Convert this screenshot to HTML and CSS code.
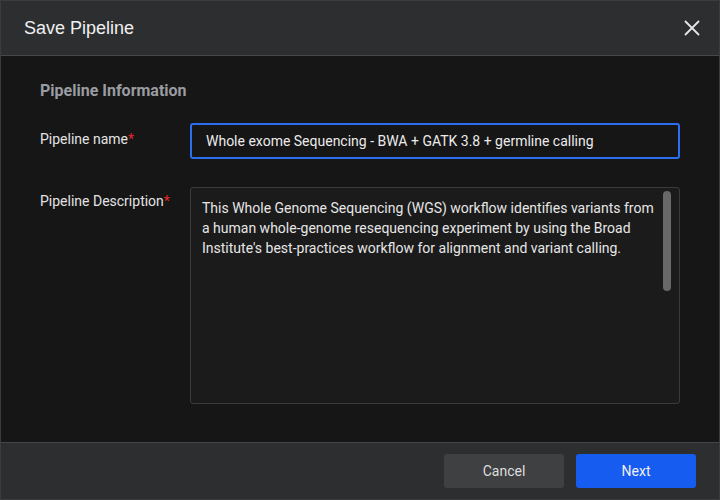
FILE: index.html
```html
<!DOCTYPE html>
<html>
<head>
<meta charset="utf-8">
<link rel="stylesheet" href="styles.css">
</head>
<body>
<div class="dialog">
  <header class="dlg-header">
    <h1 class="dlg-title">Save Pipeline</h1>
    <button class="close-btn" aria-label="Close">
      <svg width="16" height="16" viewBox="0 0 16 16"><path d="M1 1L15 15M15 1L1 15" stroke="#e6e6e6" stroke-width="1.8" fill="none"/></svg>
    </button>
  </header>
  <main class="dlg-body">
    <h2 class="section-title">Pipeline Information</h2>
    <div class="form-row row-name">
      <label class="field-label label-name">Pipeline name<span class="req">*</span></label>
      <div class="text-input">Whole exome Sequencing - BWA + GATK 3.8 + germline calling</div>
    </div>
    <div class="form-row row-desc">
      <label class="field-label label-desc">Pipeline Description<span class="req">*</span></label>
      <div class="textarea">
        <p class="textarea-text">This Whole Genome Sequencing (WGS) workflow identifies variants from a human whole-genome resequencing experiment by using the Broad Institute's best-practices workflow for alignment and variant calling.</p>
        <div class="scroll-thumb"></div>
      </div>
    </div>
  </main>
  <footer class="dlg-footer">
    <button class="btn btn-cancel">Cancel</button>
    <button class="btn btn-next">Next</button>
  </footer>
</div>
</body>
</html>
```

FILE: styles.css
```css
* { box-sizing: border-box; }
html, body { margin: 0; padding: 0; background: #161616; }
body { font-family: Roboto, "Liberation Sans", sans-serif; }

.dialog {
  width: 720px;
  height: 500px;
  display: flex;
  flex-direction: column;
  border: 1px solid #3b3c3e;
  background: #161616;
}

.dlg-header {
  height: 55px;
  flex: none;
  background: #2d2e30;
  border-bottom: 1px solid #47484a;
  display: flex;
  align-items: center;
  justify-content: space-between;
  padding: 0 19px 0 23px;
}
.dlg-title {
  margin: 0;
  font-family: "Liberation Sans", Arial, sans-serif;
  font-size: 18px;
  font-weight: 400;
  color: #f0f0f0;
}
.close-btn {
  background: none;
  border: 0;
  padding: 0;
  width: 16px;
  height: 16px;
  display: flex;
}

.dlg-body {
  flex: 1;
  padding: 25px 39px 0 39px;
  background: #161616;
}
.section-title {
  margin: 0 0 22px 0;
  font-size: 16px;
  line-height: 20px;
  font-weight: 700;
  color: #9a9ca1;
}

.form-row {
  display: grid;
  grid-template-columns: 150px 490px;
}
.row-desc { margin-top: 28px; }

.field-label {
  font-size: 14px;
  line-height: 20px;
  color: #e3e3e3;
}
.label-name { padding-top: 6px; }
.label-desc { padding-top: 4px; }
.req { color: #e5262b; }

.text-input {
  height: 36px;
  border: 2px solid #2b6ef2;
  border-radius: 3px;
  background: #161616;
  padding: 0 14px;
  display: flex;
  align-items: center;
  font-size: 14px;
  color: #ececec;
}

.textarea {
  position: relative;
  height: 217px;
  border: 1px solid #3a3b3e;
  border-radius: 3px;
  background: #1b1b1b;
  padding: 10px 20px 0 11px;
}
.textarea-text {
  margin: 0;
  font-size: 14px;
  line-height: 20px;
  color: #e6e6e6;
}
.scroll-thumb {
  position: absolute;
  top: 3px;
  right: 8px;
  width: 8px;
  height: 100px;
  border-radius: 4px;
  background: #686868;
}

.dlg-footer {
  height: 57px;
  flex: none;
  background: #2d2e30;
  border-top: 1px solid #45464a;
  display: flex;
  justify-content: flex-end;
  align-items: center;
  gap: 12px;
  padding: 0 23px 0 0;
}
.btn {
  width: 120px;
  height: 34px;
  border: 0;
  border-radius: 3px;
  font-family: Roboto, "Liberation Sans", sans-serif;
  font-size: 14px;
  color: #f0f0f0;
}
.btn-cancel { background: #3f4042; color: #dedede; }
.btn-next { background: #175cf0; }
```
